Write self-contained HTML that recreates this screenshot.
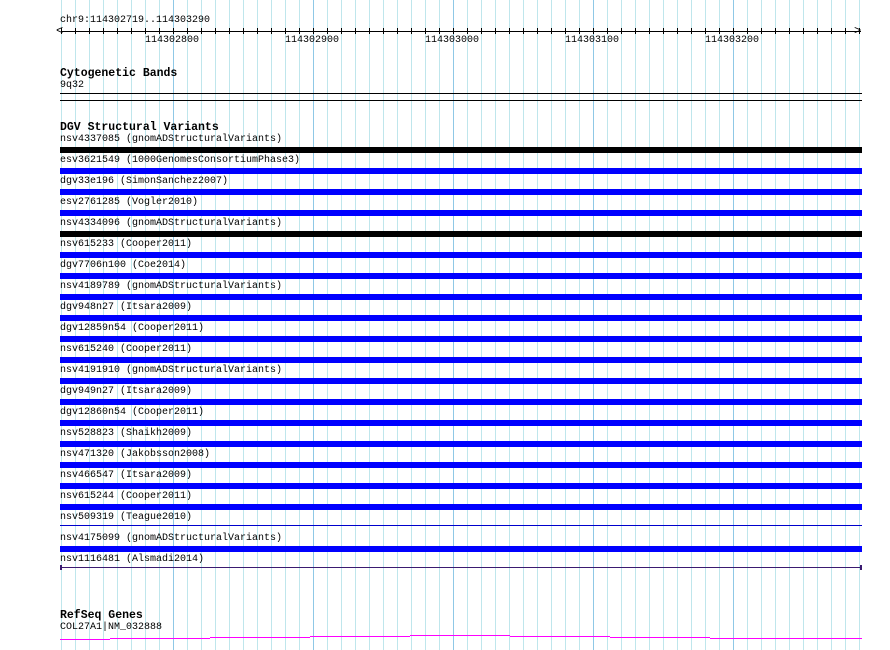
<!DOCTYPE html>
<html><head><meta charset="utf-8"><style>
body{margin:0;width:890px;height:650px;background:#fff;position:relative;overflow:hidden;font-family:"Liberation Mono","DejaVu Sans Mono",monospace;}
.g{position:absolute;top:0;width:1px;height:650px;background:#bfe6ec;}
.G{background:#8fc8e6;}
.t{position:absolute;font-size:10px;line-height:12px;color:#000;white-space:pre;}
.h{position:absolute;font-size:11.5px;font-weight:bold;line-height:13px;white-space:pre;}
.b{position:absolute;left:60px;width:802px;height:6px;}
.tk{position:absolute;top:28px;width:1px;height:6px;background:#000;}
</style></head><body>
<div id="grid"></div>
<script>
var s='';
for(var x=61;x<=859;x+=14){var maj=((x-173)%140===0);s+='<div class="g'+(maj?' G':'')+'" style="left:'+x+'px"></div>';}
for(var x=61;x<=859;x+=14){s+='<div class="tk" style="left:'+x+'px"></div>';}
document.getElementById('grid').innerHTML=s;
</script>
<div class="t" style="left:60px;top:15px">chr9:114302719..114303290</div>
<div style="position:absolute;left:61px;top:31px;width:800px;height:1px;background:#000"></div>
<div class="t" style="left:56px;top:25px;font-size:12px">&lt;</div>
<div class="t" style="left:854px;top:25px;font-size:12px">&gt;</div>
<div class="t" style="left:145px;top:35px">114302800</div>
<div class="t" style="left:285px;top:35px">114302900</div>
<div class="t" style="left:425px;top:35px">114303000</div>
<div class="t" style="left:565px;top:35px">114303100</div>
<div class="t" style="left:705px;top:35px">114303200</div>
<div class="h" style="left:60px;top:67px">Cytogenetic Bands</div>
<div class="t" style="left:60px;top:80px">9q32</div>
<div style="position:absolute;left:60px;top:93px;width:802px;height:1px;background:#000"></div>
<div style="position:absolute;left:60px;top:100px;width:802px;height:1px;background:#000"></div>
<div class="h" style="left:60px;top:121px">DGV Structural Variants</div>
<div id="rows"></div>
<script>
var r=[["nsv4337085 (gnomADStructuralVariants)","#000"],["esv3621549 (1000GenomesConsortiumPhase3)","#00f"],["dgv33e196 (SimonSanchez2007)","#00f"],["esv2761285 (Vogler2010)","#00f"],["nsv4334096 (gnomADStructuralVariants)","#000"],["nsv615233 (Cooper2011)","#00f"],["dgv7706n100 (Coe2014)","#00f"],["nsv4189789 (gnomADStructuralVariants)","#00f"],["dgv948n27 (Itsara2009)","#00f"],["dgv12859n54 (Cooper2011)","#00f"],["nsv615240 (Cooper2011)","#00f"],["nsv4191910 (gnomADStructuralVariants)","#00f"],["dgv949n27 (Itsara2009)","#00f"],["dgv12860n54 (Cooper2011)","#00f"],["nsv528823 (Shaikh2009)","#00f"],["nsv471320 (Jakobsson2008)","#00f"],["nsv466547 (Itsara2009)","#00f"],["nsv615244 (Cooper2011)","#00f"],["nsv509319 (Teague2010)","thin"],["nsv4175099 (gnomADStructuralVariants)","#00f"],["nsv1116481 (Alsmadi2014)","purple"]];
var h='';
for(var i=0;i<r.length;i++){var y=147+21*i;
h+='<div class="t" style="left:60px;top:'+(y-13)+'px">'+r[i][0]+'</div>';
if(r[i][1]=="thin")h+='<div style="position:absolute;left:60px;top:'+(y+479-479+0)+'px;width:802px;height:1px;background:#00c;margin-top:0px;top:'+(y-0)+'px"></div>';
else if(r[i][1]=="purple")h+='<div style="position:absolute;left:60px;top:'+(y+0)+'px;width:802px;height:1px;background:#3a1a70"></div><div style="position:absolute;left:60px;top:'+(y-2)+'px;width:2px;height:5px;background:#3a1a70"></div><div style="position:absolute;left:860px;top:'+(y-2)+'px;width:2px;height:5px;background:#3a1a70"></div>';
else h+='<div class="b" style="top:'+y+'px;background:'+r[i][1]+'"></div>';}
document.getElementById('rows').innerHTML=h;
</script>
<div class="h" style="left:60px;top:609px">RefSeq Genes</div>
<div class="t" style="left:60px;top:622px">COL27A1|NM_032888</div>
<div style="position:absolute;left:60px;top:639px;width:50px;height:1px;background:#f0f"></div>
<div style="position:absolute;left:110px;top:638px;width:100px;height:1px;background:#f0f"></div>
<div style="position:absolute;left:210px;top:637px;width:100px;height:1px;background:#f0f"></div>
<div style="position:absolute;left:310px;top:636px;width:100px;height:1px;background:#f0f"></div>
<div style="position:absolute;left:410px;top:635px;width:100px;height:1px;background:#f0f"></div>
<div style="position:absolute;left:510px;top:636px;width:100px;height:1px;background:#f0f"></div>
<div style="position:absolute;left:610px;top:637px;width:100px;height:1px;background:#f0f"></div>
<div style="position:absolute;left:710px;top:638px;width:100px;height:1px;background:#f0f"></div>
<div style="position:absolute;left:810px;top:638px;width:52px;height:1px;background:#f0f"></div>
</body></html>
